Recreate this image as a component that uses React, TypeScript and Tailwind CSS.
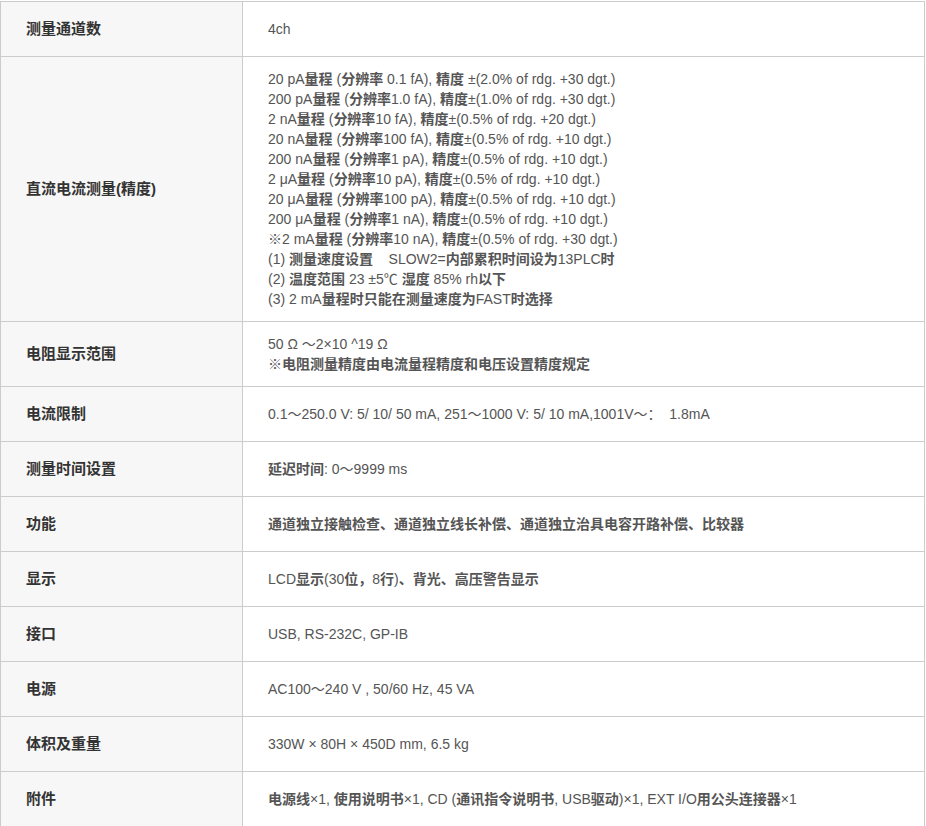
import React from "react";

const rows: { label: string; lines: string[] }[] = [
  { label: "测量通道数", lines: ["4ch"] },
  {
    label: "直流电流测量(精度)",
    lines: [
      "20 pA量程 (分辨率 0.1 fA), 精度 ±(2.0% of rdg. +30 dgt.)",
      "200 pA量程 (分辨率1.0 fA), 精度±(1.0% of rdg. +30 dgt.)",
      "2 nA量程 (分辨率10 fA), 精度±(0.5% of rdg. +20 dgt.)",
      "20 nA量程 (分辨率100 fA), 精度±(0.5% of rdg. +10 dgt.)",
      "200 nA量程 (分辨率1 pA), 精度±(0.5% of rdg. +10 dgt.)",
      "2 μA量程 (分辨率10 pA), 精度±(0.5% of rdg. +10 dgt.)",
      "20 μA量程 (分辨率100 pA), 精度±(0.5% of rdg. +10 dgt.)",
      "200 μA量程 (分辨率1 nA), 精度±(0.5% of rdg. +10 dgt.)",
      "※2 mA量程 (分辨率10 nA), 精度±(0.5% of rdg. +30 dgt.)",
      "(1) 测量速度设置\u00a0\u00a0\u00a0 SLOW2=内部累积时间设为13PLC时",
      "(2) 温度范围 23 ±5℃ 湿度 85% rh以下",
      "(3) 2 mA量程时只能在测量速度为FAST时选择",
    ],
  },
  {
    label: "电阻显示范围",
    lines: ["50 Ω ～2×10 ^19 Ω", "※电阻测量精度由电流量程精度和电压设置精度规定"],
  },
  {
    label: "电流限制",
    lines: ["0.1～250.0 V: 5/ 10/ 50 mA, 251～1000 V: 5/ 10 mA,1001V～：\u00a0 1.8mA"],
  },
  { label: "测量时间设置", lines: ["延迟时间: 0～9999 ms"] },
  { label: "功能", lines: ["通道独立接触检查、通道独立线长补偿、通道独立治具电容开路补偿、比较器"] },
  { label: "显示", lines: ["LCD显示(30位，8行)、背光、高压警告显示"] },
  { label: "接口", lines: ["USB, RS-232C, GP-IB"] },
  { label: "电源", lines: ["AC100～240 V , 50/60 Hz, 45 VA"] },
  { label: "体积及重量", lines: ["330W × 80H × 450D mm, 6.5 kg"] },
  {
    label: "附件",
    lines: ["电源线×1, 使用说明书×1, CD (通讯指令说明书, USB驱动)×1, EXT I/O用公头连接器×1"],
  },
];

const cjk = /([\u3400-\u9fff\u3001\uff0c※]+)/;

function Line({ text }: { text: string }) {
  const parts = text.split(cjk);
  return (
    <div>
      {parts.map((p, i) =>
        cjk.test(p) ? (
          <span key={i} className="font-bold">
            {p}
          </span>
        ) : (
          <span key={i}>{p}</span>
        )
      )}
    </div>
  );
}

export default function App() {
  return (
    <div className="bg-white min-h-screen pt-px">
      <div
        className="w-[925px] border-l border-r border-t border-[#cccccc]"
        style={{ fontFamily: '"Liberation Sans", Arial, "Noto Sans CJK SC", sans-serif' }}
      >
        {rows.map((r) => (
          <div key={r.label} className="flex border-b border-[#cccccc]">
            <div className="w-[242px] shrink-0 border-r border-[#cccccc] bg-[#f7f7f7] px-[25px] flex items-center min-h-[54px]">
              <span className="text-[15px] font-bold text-[#333333]">{r.label}</span>
            </div>
            <div className="flex-1 pl-[25px] pr-4 py-3 flex flex-col justify-center min-h-[54px] text-[14px] leading-5 text-[#555555]">
              {r.lines.map((l, i) => (
                <Line key={i} text={l} />
              ))}
            </div>
          </div>
        ))}
      </div>
    </div>
  );
}
